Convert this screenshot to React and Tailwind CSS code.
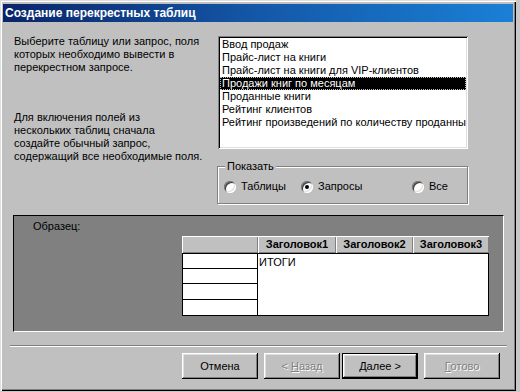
import React from 'react';

const raised =
  'shadow-[inset_-1px_-1px_0_#000,inset_1px_1px_0_#fff,inset_-2px_-2px_0_#808080,inset_2px_2px_0_#dfdfdf]';
const sunken =
  'shadow-[inset_1px_1px_0_#808080,inset_-1px_-1px_0_#fff,inset_2px_2px_0_#000,inset_-2px_-2px_0_#dfdfdf]';

const items = [
  'Ввод продаж',
  'Прайс-лист на книги',
  'Прайс-лист на книги для VIP-клиентов',
  'Продажи книг по месяцам',
  'Проданные книги',
  'Рейтинг клиентов',
  'Рейтинг произведений по количеству проданных книг',
];

function Radio({ checked, label, width }) {
  return (
    <div className={`flex items-center ${width}`}>
      <span className="flex items-center justify-center w-[12px] h-[12px] rounded-full bg-white shadow-[inset_1px_1px_0_#808080,inset_-1px_-1px_0_#fff,inset_2px_2px_0_#404040,inset_-2px_-2px_0_#dfdfdf]">
        {checked && <span className="w-[4px] h-[4px] rounded-full bg-black" />}
      </span>
      <span className="ml-[5px]">{label}</span>
    </div>
  );
}

function Button({ children, disabled, isDefault, className = '' }) {
  const text = disabled
    ? 'text-[#808080] [text-shadow:1px_1px_0_#fff]'
    : 'text-black';
  return (
    <div
      className={`w-[76px] h-[26px] flex items-center justify-center bg-[#c0c0c0] ${
        isDefault ? 'border border-black' : ''
      } ${raised} ${text} ${className}`}
    >
      {children}
    </div>
  );
}

export default function App() {
  return (
    <div className="w-[520px] h-[392px] overflow-hidden bg-[#c8c8c8] font-['Liberation_Sans',Arial,sans-serif] text-[11px] leading-[13px] text-black">
      <div className="w-[516px] h-[391px] bg-[#c0c0c0] pt-[4px] pl-[3px] pr-[3px] shadow-[inset_1px_1px_0_#dfdfdf,inset_2px_2px_0_#fff,inset_-1px_-1px_0_#000,inset_-2px_-2px_0_#808080]">
        {/* title bar */}
        <div className="h-[18px] w-[510px] bg-linear-to-r from-[#0a246a] via-[#1458a8] to-[#1a80d6] flex items-center pl-[2px]">
          <span className="text-white font-bold text-[12px]">Создание перекрестных таблиц</span>
        </div>

        {/* main */}
        <div className="flex mt-[14px]">
          <div className="w-[204px] pl-[11px] pr-[4px] -mt-[1px]">
            <p>
              Выберите таблицу или запрос, поля
              <br />
              которых необходимо вывести в
              <br />
              перекрестном запросе.
            </p>
            <p className="mt-[37px]">
              Для включения полей из
              <br />
              нескольких таблиц сначала
              <br />
              создайте обычный запрос,
              <br />
              содержащий все необходимые поля.
            </p>
          </div>

          <div className="ml-[11px] w-[250px]">
            <div className={`h-[113px] bg-white pt-[2px] pl-[2px] pr-[2px] overflow-hidden ${sunken}`}>
              {items.map((it, i) => (
                <div
                  key={it}
                  className={`h-[13px] pl-[2px] whitespace-nowrap overflow-hidden ${
                    i === 3 ? 'bg-black text-white outline-1 outline-dotted outline-[#c0c0c0] -outline-offset-1' : ''
                  }`}
                >
                  {it}
                </div>
              ))}
            </div>

            <div className="relative mt-[17px] -ml-[1px] h-[38px] border border-[#808080] shadow-[1px_1px_0_#fff,inset_1px_1px_0_#fff] flex items-center pt-[3px]">
              <span className="absolute -top-[7px] left-[7px] px-[2px] bg-[#c0c0c0]">Показать</span>
              <Radio label="Таблицы" width="w-[77px] ml-[6px]" />
              <Radio label="Запросы" checked width="w-[111px]" />
              <Radio label="Все" width="" />
            </div>
          </div>
        </div>

        {/* sample */}
        <div className="mt-[11px] ml-[10px] w-[491px] h-[117px] bg-[#808080] border-t border-l border-black border-r border-b border-r-white border-b-white pl-[19px] pt-[4px]">
          <div>Образец:</div>
          <div className="ml-[149px] mt-[3px] w-[307px]">
            <div className="flex h-[17px] text-[11px] font-bold">
              <div className="w-[76px] bg-[#c0c0c0] shadow-[inset_1px_1px_0_#fff,inset_-1px_-1px_0_#808080]" />
              <div className="w-[78px] bg-[#c0c0c0] shadow-[inset_1px_1px_0_#fff,inset_-1px_-1px_0_#808080] flex items-center justify-center">
                Заголовок1
              </div>
              <div className="w-[77px] bg-[#c0c0c0] shadow-[inset_1px_1px_0_#fff,inset_-1px_-1px_0_#808080] flex items-center justify-center">
                Заголовок2
              </div>
              <div className="w-[76px] bg-[#c0c0c0] shadow-[inset_1px_1px_0_#fff,inset_-1px_-1px_0_#808080] flex items-center justify-center">
                Заголовок3
              </div>
            </div>
            <div className="flex border border-black bg-white h-[63px]">
              <div className="w-[75px] border-r border-black flex flex-col">
                <div className="h-[15px] border-b border-black" />
                <div className="h-[15px] border-b border-black" />
                <div className="h-[16px] border-b border-black" />
                <div className="flex-1" />
              </div>
              <div className="flex-1 pl-[1px] pt-[2px]">ИТОГИ</div>
            </div>
          </div>
        </div>

        {/* separator */}
        <div className="mt-[13px] ml-[7px] w-[497px] h-[2px] border-t border-[#808080] border-b border-b-white" />

        {/* buttons */}
        <div className="flex mt-[6px] ml-[179px]">
          <Button>Отмена</Button>
          <Button disabled className="ml-[6px]">
            &lt;&nbsp;<span className="underline">Н</span>азад
          </Button>
          <Button isDefault className="ml-[2px]">
            <span className="underline">Д</span>алее &gt;
          </Button>
          <Button disabled className="ml-[6px]">
            <span className="underline">Г</span>отово
          </Button>
        </div>
      </div>
    </div>
  );
}
